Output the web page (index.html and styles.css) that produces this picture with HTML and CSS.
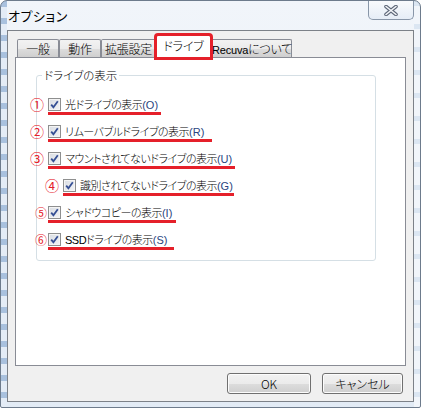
FILE: index.html
```html
<!DOCTYPE html>
<html lang="ja">
<head>
    <meta charset="UTF-8">
    <title>オプション</title>
    <link rel="stylesheet" href="styles.css">
</head>
<body>
    <div class="window">
        <div class="titlebar">
            <span class="title">オプション</span>
            <div class="close">
                <svg width="14" height="11" viewBox="0 0 14 11">
                    <path d="M2 1.5 L12 9.5 M12 1.5 L2 9.5" stroke="#5d6778" stroke-width="3.6" stroke-linecap="round"/>
                    <path d="M2 1.5 L12 9.5 M12 1.5 L2 9.5" stroke="#f4f6f9" stroke-width="1.6" stroke-linecap="round"/>
                </svg>
            </div>
        </div>

        <div class="client">
            <div class="tabs">
                <div class="tab w42">一般</div>
                <div class="tab w42">動作</div>
                <div class="tab w55">拡張設定</div>
                <div class="tab w55 active">ドライブ</div>
                <div class="tab w81"><span class="latin">Recuva</span>について</div>
            </div>

            <div class="panel">
                <fieldset class="group">
                    <legend>ドライブの表示</legend>

                    <div class="row">
                        <span class="num">①</span>
                        <label class="opt pr-3"><span class="check"><svg width="11" height="11" viewBox="0 0 11 11"><path d="M2.2 5.6 L4.4 8.2 L8.8 2.2" fill="none" stroke="#354f94" stroke-width="1.8"/></svg></span><span class="text">光ドライブの表示<span class="key">(O)</span></span></label>
                    </div>
                    <div class="row">
                        <span class="num">②</span>
                        <label class="opt pr-8"><span class="check"><svg width="11" height="11" viewBox="0 0 11 11"><path d="M2.2 5.6 L4.4 8.2 L8.8 2.2" fill="none" stroke="#354f94" stroke-width="1.8"/></svg></span><span class="text">リムーバブルドライブの表示<span class="key">(R)</span></span></label>
                    </div>
                    <div class="row">
                        <span class="num">③</span>
                        <label class="opt pr-3"><span class="check"><svg width="11" height="11" viewBox="0 0 11 11"><path d="M2.2 5.6 L4.4 8.2 L8.8 2.2" fill="none" stroke="#354f94" stroke-width="1.8"/></svg></span><span class="text">マウントされてないドライブの表示<span class="key">(U)</span></span></label>
                    </div>
                    <div class="row indent">
                        <span class="num">④</span>
                        <label class="opt pr-1"><span class="check"><svg width="11" height="11" viewBox="0 0 11 11"><path d="M2.2 5.6 L4.4 8.2 L8.8 2.2" fill="none" stroke="#354f94" stroke-width="1.8"/></svg></span><span class="text">識別されてないドライブの表示<span class="key">(G)</span></span></label>
                    </div>
                    <div class="row">
                        <span class="num small">⑤</span>
                        <label class="opt pr-4"><span class="check"><svg width="11" height="11" viewBox="0 0 11 11"><path d="M2.2 5.6 L4.4 8.2 L8.8 2.2" fill="none" stroke="#354f94" stroke-width="1.8"/></svg></span><span class="text">シャドウコピーの表示<span class="key">(I)</span></span></label>
                    </div>
                    <div class="row">
                        <span class="num small">⑥</span>
                        <label class="opt pr-7"><span class="check"><svg width="11" height="11" viewBox="0 0 11 11"><path d="M2.2 5.6 L4.4 8.2 L8.8 2.2" fill="none" stroke="#354f94" stroke-width="1.8"/></svg></span><span class="text"><span class="latin">SSD</span>ドライブの表示<span class="key">(S)</span></span></label>
                    </div>
                </fieldset>
            </div>

            <div class="buttons">
                <button class="btn ok">OK</button>
                <button class="btn cancel">キャンセル</button>
            </div>
        </div>
    </div>
</body>
</html>
```

FILE: styles.css
```css
* {
    margin: 0;
    padding: 0;
    box-sizing: border-box;
}

body {
    font-family: "Noto Sans CJK JP", "Liberation Sans", sans-serif;
    font-size: 11px;
    font-weight: 300;
    color: #000;
    background: #fff;
    width: 421px;
    height: 408px;
    overflow: hidden;
    font-feature-settings: "palt";
}

.latin {
    font-family: "Liberation Sans", sans-serif;
    font-weight: 400;
}

.window {
    width: 421px;
    height: 408px;
    border: 1px solid #6d7b8c;
    border-radius: 7px 7px 2px 2px;
    background:
        repeating-linear-gradient(180deg, #a9c1de 0 6px, #e4ecf6 6px 17px) left top / 6px 100% no-repeat,
        repeating-linear-gradient(180deg, #dbe6f2 0 5px, #f1f5fa 5px 23px) right top / 6px 100% no-repeat,
        linear-gradient(180deg, #f1f5fa 0%, #e2ebf5 100%);
    display: flex;
    flex-direction: column;
}

/* タイトルバー */
.titlebar {
    height: 29px;
    display: flex;
    justify-content: space-between;
    align-items: flex-start;
}

.title {
    font-size: 13px;
    font-weight: 400;
    line-height: 14px;
    margin: 8px 0 0 7px;
    letter-spacing: 0.5px;
}

.close {
    width: 46px;
    height: 19px;
    margin-right: 6px;
    border: 1px solid #8896a8;
    border-top: none;
    border-radius: 0 0 5px 5px;
    background: linear-gradient(180deg, rgba(255,255,255,0.55), rgba(225,234,245,0.7));
    display: flex;
    justify-content: center;
    align-items: center;
    padding-top: 1px;
}

/* クライアント領域 */
.client {
    height: 372px;
    margin: 0 6px 5px 6px;
    border: 1px solid #7c8188;
    background: #f0f0f0;
    padding: 4px 7px 7px 7px;
    display: flex;
    flex-direction: column;
}

.tabs {
    height: 22px;
    display: flex;
    align-items: flex-end;
    padding-left: 2px;
}

.tab {
    height: 18px;
    border: 1px solid #898c95;
    border-bottom: none;
    border-radius: 2px 2px 0 0;
    background: linear-gradient(180deg, #f2f2f2 0%, #ebebeb 50%, #dddddd 51%, #cfcfcf 100%);
    text-align: center;
    line-height: 17px;
    font-size: 12px;
    white-space: nowrap;
    letter-spacing: -0.2px;
}

.tab .latin {
    font-size: 11px;
}

.tab.w42 { width: 42px; }
.tab.w55 { width: 55px; }
.tab.w81 { width: 81px; }

.tab.active {
    height: 23px;
    margin-bottom: -1px;
    background: #fff;
    line-height: 19px;
    position: relative;
    z-index: 1;
    outline: 3px solid #e5202a;
    outline-offset: -1px;
}

.panel {
    height: 309px;
    border: 1px solid #898c95;
    background: #fff;
    padding: 10px 0 0 20px;
}

/* グループボックス */
.group {
    width: 340px;
    border: 1px solid #d5dfe5;
    border-radius: 3px;
    padding: 16px 0 10px 0;
    min-width: 0;
}

.group legend {
    margin-left: 5px;
    padding: 0 2px;
    line-height: 14px;
    font-size: 11.5px;
}

.row {
    display: flex;
    align-items: flex-start;
    margin-left: -7px;
    margin-bottom: 10px;
}

.row:last-child {
    margin-bottom: 0;
}

.row.indent {
    margin-left: 8px;
}

.num {
    width: 14px;
    margin-right: 4px;
    color: #e5202a;
    font-size: 14px;
    font-weight: 400;
    line-height: 13px;
    text-align: center;
}

.num.small {
    font-size: 12px;
    margin-left: 4px;
    margin-right: 0;
}

.opt {
    display: inline-flex;
    align-items: center;
    gap: 4px;
    height: 17px;
    line-height: 13px;
    padding-bottom: 1px;
    border-bottom: 3px solid #e5202a;
    white-space: nowrap;
    font-weight: 300;
}

.opt .text {
    letter-spacing: -0.5px;
}

.pr-1 { padding-right: 1px; }
.pr-3 { padding-right: 3px; }
.pr-4 { padding-right: 4px; }
.pr-7 { padding-right: 7px; }
.pr-8 { padding-right: 8px; }

.key {
    color: #2a4580;
    font-family: "Liberation Sans", sans-serif;
    font-weight: 400;
    font-size: 11px;
    letter-spacing: 0;
}

.check {
    width: 13px;
    height: 13px;
    flex: none;
    border: 1px solid #8e8f8f;
    background: linear-gradient(135deg, #d9dde3 0%, #f2f3f5 100%);
    box-shadow: inset 0 0 0 1px #f4f4f4;
    display: flex;
    align-items: center;
    justify-content: center;
}

/* ボタン */
.buttons {
    display: flex;
    justify-content: flex-end;
    gap: 11px;
    margin-top: 7px;
    padding-right: 3px;
}

.btn {
    height: 21px;
    border: 1px solid #707070;
    border-radius: 3px;
    background: linear-gradient(180deg, #f2f2f2 0%, #ebebeb 50%, #dddddd 51%, #cfcfcf 100%);
    box-shadow: inset 0 0 0 1px #fcfcfc;
    font-family: "Noto Sans CJK JP", "Liberation Sans", sans-serif;
    font-size: 12px;
    font-weight: 300;
    color: #000;
    font-feature-settings: "palt";
}

.btn.ok { width: 84px; }
.btn.cancel { width: 81px; }
```
